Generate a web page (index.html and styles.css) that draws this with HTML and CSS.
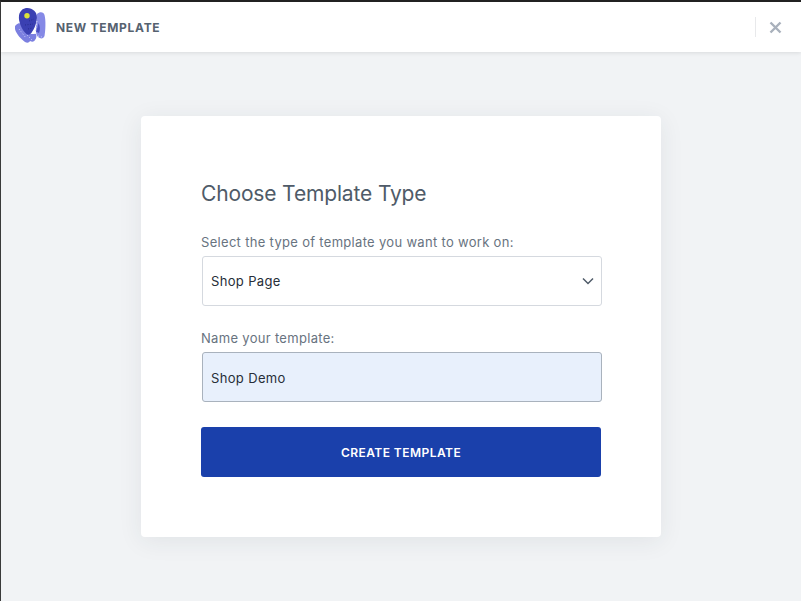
FILE: index.html
```html
<!DOCTYPE html>
<html lang="en">
<head>
<meta charset="utf-8">
<title>New Template</title>
<link rel="stylesheet" href="styles.css">
</head>
<body>
<div class="window">
  <header class="topbar">
    <div class="brand">
      <svg class="logo" width="32" height="38" viewBox="0 0 32 38" aria-hidden="true">
        <g transform="translate(-15 -7)">
          <path d="M16 25c2-2 4-2 6-1l3 7 5 3 6 0c1 2 0 5-1 6-1 2-3 2-5 1-1 2-3 2-5 1-3-2-9-8-10-13-1-2 0-3 1-4z" fill="#7b7fe0"/>
          <path d="M37 14c3-3 7-2 7.500 1 1.500 5 1 16 0 21-1 3-4 3-6.500 1-2-2-2-5-2-8z" fill="#8589e6"/>
          <path d="M22 9.500c4-2.500 9-2 12.500 1.500 2.500 2.500 3 6 2 10-1 5-2.500 8-4.500 11-1.500 2.500-3.500 3.500-5.500 2-2.500-2-4.500-5-6-9-1-3-2-6-1.500-9.500.3-2.500 1.500-4.500 3.500-6z" fill="#3b40b2"/>
          <path d="M38.500 23c1.500 3 2 6 .5 10-1-.5-2-1-3-1 1-3 2-6 2.500-9z" fill="#4a4fc0"/>
          <circle cx="27" cy="15.800" r="2.700" fill="#dbe23a"/>
          <path d="M37 21l-2 13M19 29l7 9M27 35l6 6M38 36l4 1" stroke="#d5d7f8" stroke-width=".9" stroke-dasharray="1 2" fill="none"/>
          <path d="M29 21l5-2M25 25l8-1M28 29l4-1" stroke="#272c8e" stroke-width="1" stroke-dasharray="1 1.500" fill="none"/>
        </g>
      </svg>
      <span class="title">NEW TEMPLATE</span>
    </div>
    <div class="close-wrap">
      <svg class="close" width="13" height="13" viewBox="0 0 13 13" aria-hidden="true">
        <path d="M1.500 1.500l10 10M11.500 1.500l-10 10" stroke="#a9b1bc" stroke-width="2.400" fill="none"/>
      </svg>
    </div>
  </header>
  <main class="stage">
    <form class="card">
      <h1 class="heading">Choose Template Type</h1>
      <label class="label label-type">Select the type of template you want to work on:</label>
      <div class="field select-field">
        <span>Shop Page</span>
        <svg width="12" height="8" viewBox="0 0 12 8" aria-hidden="true">
          <path d="M1 1.500l5 5 5-5" stroke="#4f5b68" stroke-width="1.500" fill="none"/>
        </svg>
      </div>
      <label class="label label-name">Name your template:</label>
      <div class="field input-field"><span>Shop Demo</span></div>
      <button type="button" class="submit">CREATE TEMPLATE</button>
    </form>
  </main>
</div>
</body>
</html>
```
FILE: styles.css
```css
* { box-sizing: border-box; }
html, body { margin: 0; height: 100%; }
body {
  font-family: Inter, "Liberation Sans", sans-serif;
  background: #f1f3f5;
  overflow: hidden;
}
.window {
  height: 601px;
  display: flex;
  flex-direction: column;
  border-top: 2px solid #222;
  border-left: 1px solid #3a3a3a;
}
.topbar {
  height: 50px;
  flex: none;
  background: #fff;
  display: flex;
  align-items: center;
  justify-content: space-between;
  padding: 0 19px 0 14px;
  box-shadow: 0 1px 4px rgba(0, 0, 0, 0.1);
  position: relative;
}
.brand { display: flex; align-items: center; gap: 9px; }
.logo { display: block; margin-top: -3px; }
.title {
  font-size: 12px;
  font-weight: 700;
  letter-spacing: 0.7px;
  color: #566270;
}
.close-wrap {
  height: 20px;
  display: flex;
  align-items: center;
  padding-left: 13px;
  border-left: 1px solid #e8e9eb;
}
.close { display: block; }
.stage {
  flex: 1;
  display: flex;
  justify-content: center;
  align-items: flex-start;
  padding: 64px 0 0;
}
.card {
  width: 520px;
  height: 421px;
  background: #fff;
  border-radius: 4px;
  box-shadow: 0 4px 24px rgba(40, 50, 70, 0.08);
  padding: 64px 60px 0;
  display: flex;
  flex-direction: column;
}
.heading {
  margin: 0;
  font-size: 21px;
  line-height: 28px;
  font-weight: 400;
  letter-spacing: -0.15px;
  color: #4f5b68;
}
.label {
  font-size: 13px;
  line-height: 16px;
  letter-spacing: 0.31px;
  color: #68737f;
}
.label-type { margin-top: 26px; }
.label-name { margin-top: 24px; }
.field {
  width: 400px;
  height: 50px;
  margin-left: 1px;
  border-radius: 3px;
  display: flex;
  align-items: center;
  justify-content: space-between;
  padding: 0 7px 0 8px;
  font-size: 13px;
  letter-spacing: 0.35px;
  color: #272e38;
}
.select-field {
  margin-top: 6px;
  border: 1px solid #d5d9df;
  background: #fff;
}
.input-field {
  margin-top: 6px;
  padding-top: 2px;
  border: 1px solid #a9b2bd;
  background: #e8f0fc;
}
.submit {
  margin-top: 25px;
  width: 400px;
  height: 50px;
  border: 0;
  border-radius: 3px;
  background: #1a40ab;
  color: #fff;
  font-family: Inter, "Liberation Sans", sans-serif;
  font-size: 12px;
  font-weight: 600;
  letter-spacing: 0.45px;
}
```
